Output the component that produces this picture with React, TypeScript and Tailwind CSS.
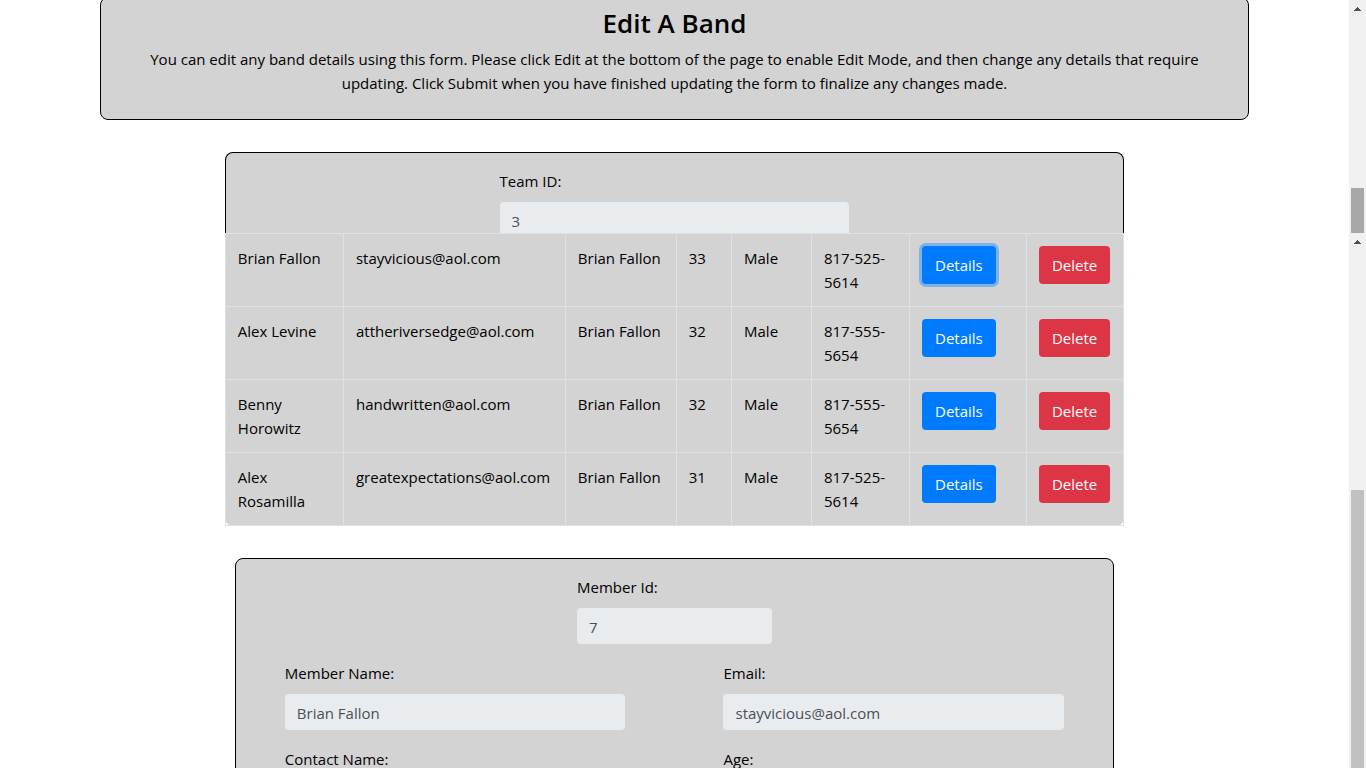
import React from "react";

type Member = {
  name: string;
  email: string;
  contact: string;
  age: number;
  gender: string;
  phone: string;
};

const members: Member[] = [
  { name: "Brian Fallon", email: "stayvicious@aol.com", contact: "Brian Fallon", age: 33, gender: "Male", phone: "817-525-5614" },
  { name: "Alex Levine", email: "attheriversedge@aol.com", contact: "Brian Fallon", age: 32, gender: "Male", phone: "817-555-5654" },
  { name: "Benny Horowitz", email: "handwritten@aol.com", contact: "Brian Fallon", age: 32, gender: "Male", phone: "817-555-5654" },
  { name: "Alex Rosamilla", email: "greatexpectations@aol.com", contact: "Brian Fallon", age: 31, gender: "Male", phone: "817-525-5614" },
];

function ScrollTrack({ children }: { children: React.ReactNode }) {
  return (
    <div className="flex w-[17px] shrink-0 flex-col items-center bg-[#f1f1f1]" aria-hidden="true">
      <svg className="h-[17px] w-[17px] shrink-0" viewBox="0 0 17 17" shapeRendering="crispEdges">
        <path d="M8 7h1v1h1v1h1v1h1v1H5v-1h1V9h1V8h1z" fill="#505050" />
      </svg>
      {children}
    </div>
  );
}

function Field({ id, label, value }: { id: string; label: string; value: string }) {
  return (
    <div>
      <label htmlFor={id} className="mb-[9px] block">
        {label}
      </label>
      <input
        id={id}
        defaultValue={value}
        disabled
        className="block h-9 w-full rounded bg-[#e9ecef] px-3 pt-0.5 text-[#495057]"
      />
    </div>
  );
}

function MemberRow({ member, active }: { member: Member; active: boolean }) {
  const cell = "border border-[#dee2e6] p-3 text-left align-top";
  return (
    <tr className="h-[73px]">
      <td className={cell}>{member.name}</td>
      <td className={cell}>{member.email}</td>
      <td className={cell}>{member.contact}</td>
      <td className={cell}>{member.age}</td>
      <td className={cell}>{member.gender}</td>
      <td className={cell}>{member.phone}</td>
      <td className={cell}>
        <button
          type="button"
          className={
            active
              ? "block h-[38px] w-[74px] rounded bg-[#007bff] text-white ring-3 ring-[#268fff]/50"
              : "block h-[38px] w-[74px] rounded bg-[#007bff] text-white"
          }
        >
          Details
        </button>
      </td>
      <td className={cell}>
        <button type="button" className="block h-[38px] w-[71px] rounded bg-[#dc3545] text-white">
          Delete
        </button>
      </td>
    </tr>
  );
}

export default function App() {
  return (
    <div className="flex h-screen flex-col overflow-hidden bg-white font-['Open_Sans','Noto_Sans',sans-serif] text-[15px] leading-6 text-black">
      <section className="flex h-[233px] shrink-0 overflow-hidden">
        <main className="min-w-0 flex-1">
          <header className="-mt-[3px] mx-[100px] rounded-lg border border-black bg-[#d3d3d3] px-8 pt-2 pb-6 text-center">
            <h1 className="mb-[7px] text-[26px] leading-[34px] font-semibold">Edit A Band</h1>
            <p>
              You can edit any band details using this form. Please click Edit at the bottom of the page to enable
              Edit Mode, and then change any details that require updating. Click Submit when you have finished
              updating the form to finalize any changes made.
            </p>
          </header>
          <form className="mx-auto mt-8 w-2/3 rounded-t-lg border border-b-0 border-black bg-[#d3d3d3] pt-4 pb-8">
            <div className="mx-auto w-[39%]">
              <Field id="team-id" label="Team ID:" value="3" />
            </div>
          </form>
        </main>
        <ScrollTrack>
          <div className="mt-auto h-[45px] w-[13px] bg-[#a8a8a8]" />
        </ScrollTrack>
      </section>

      <section className="flex min-h-0 flex-1 overflow-hidden">
        <div className="min-w-0 flex-1">
          <div className="mx-auto w-2/3 rounded-b-lg bg-[#d3d3d3]">
            <table className="w-full table-fixed border-collapse" aria-label="Band members">
              <colgroup>
                <col className="w-[13.15%]" />
                <col className="w-[24.7%]" />
                <col className="w-[12.35%]" />
                <col className="w-[6.15%]" />
                <col className="w-[8.9%]" />
                <col className="w-[10.9%]" />
                <col className="w-[13.05%]" />
                <col className="w-[10.8%]" />
              </colgroup>
              <tbody>
                {members.map((member, index) => (
                  <MemberRow key={member.name} member={member} active={index === 0} />
                ))}
              </tbody>
            </table>
          </div>
          <div className="mx-auto mt-8 w-2/3 px-2.5">
            <form className="rounded-lg border border-black bg-[#d3d3d3] pt-4 pb-8">
              <div className="mx-auto w-2/9">
                <Field id="member-id" label="Member Id:" value="7" />
              </div>
              <div className="mt-[17px] grid grid-cols-2 gap-x-[98px] gap-y-[17px] px-[49px]">
                <Field id="member-name" label="Member Name:" value="Brian Fallon" />
                <Field id="member-email" label="Email:" value="stayvicious@aol.com" />
                <Field id="contact-name" label="Contact Name:" value="Brian Fallon" />
                <Field id="member-age" label="Age:" value="33" />
              </div>
            </form>
          </div>
        </div>
        <ScrollTrack>
          <div className="mt-60 w-[13px] flex-1 bg-[#c1c1c1]" />
        </ScrollTrack>
      </section>
    </div>
  );
}
